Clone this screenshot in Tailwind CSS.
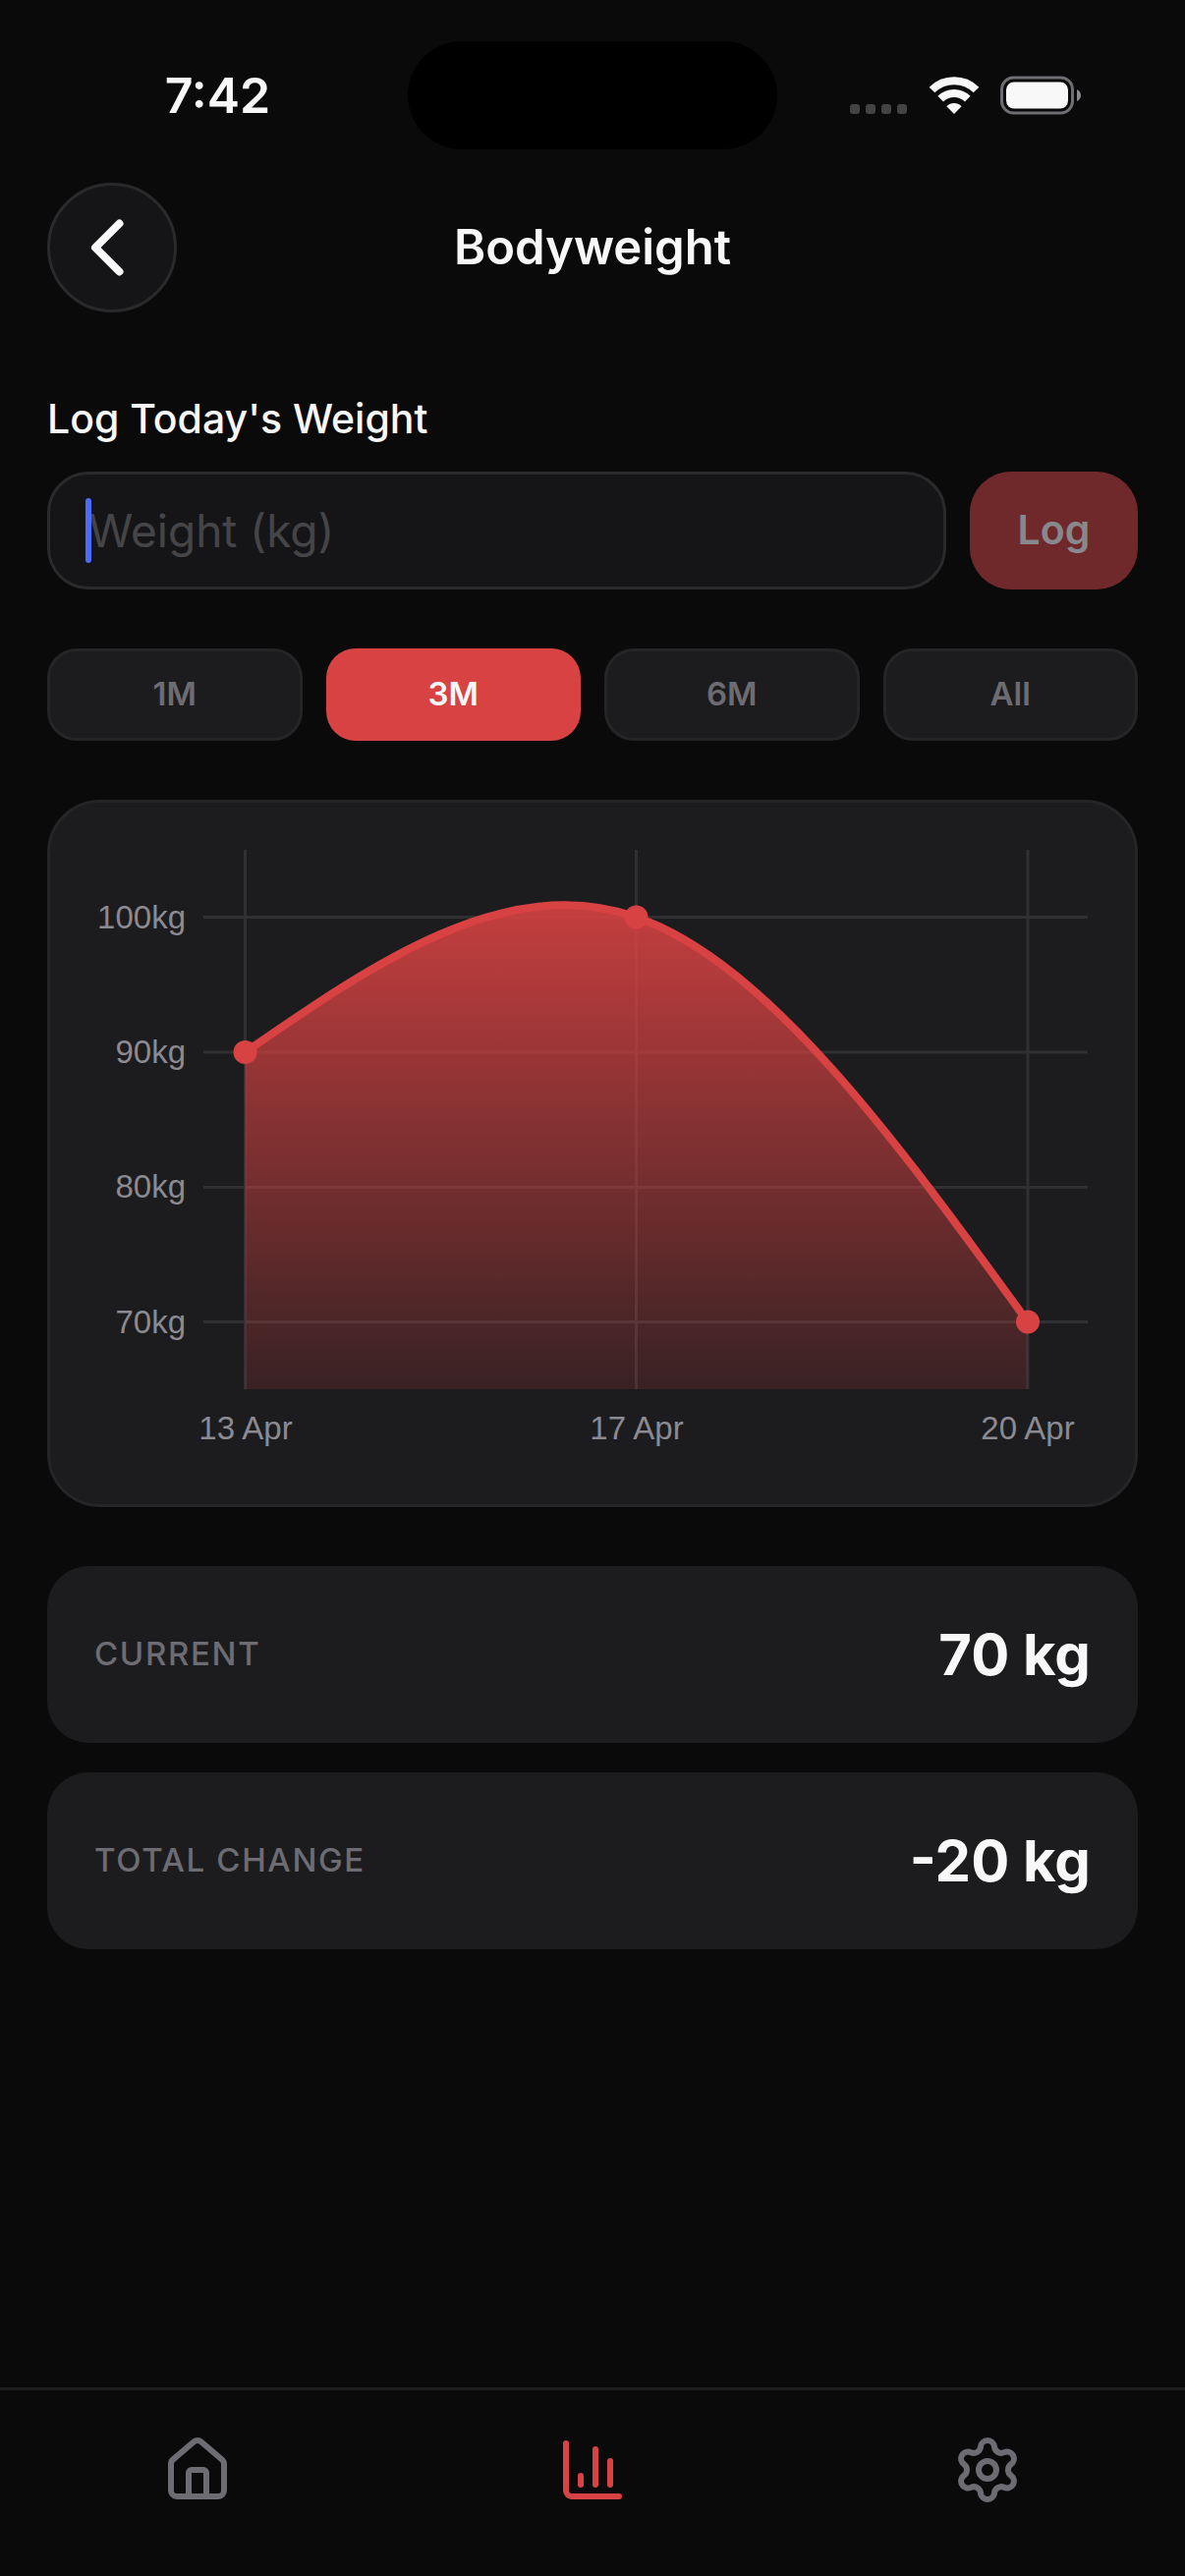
<!DOCTYPE html>
<html lang="en">
<head>
  <meta charset="UTF-8" />
  <meta name="viewport" content="width=device-width, initial-scale=1.0" />
  <title>Bodyweight</title>
  <script src="https://cdn.jsdelivr.net/npm/@tailwindcss/browser@4"></script>
</head>
<body class="bg-[#0a0a0a] text-[#f8f8f8] min-h-screen flex flex-col font-['Inter',sans-serif]">

  <!-- Status bar -->
  <div class="grid grid-cols-[1fr_376px_1fr] items-center pt-[42px] pb-[34px]">
    <div class="pl-7 text-center text-[50px] leading-[60px] font-semibold">7:42</div>
    <div class="h-[110px] rounded-full bg-black"></div>
    <div class="flex items-center justify-center pr-8">
      <svg class="w-[58px] h-[38px] mr-[22px]" viewBox="0 0 58 38" fill="#434345">
        <rect x="0" y="28" width="10" height="10" rx="3" />
        <rect x="16" y="28" width="10" height="10" rx="3" />
        <rect x="32" y="28" width="10" height="10" rx="3" />
        <rect x="48" y="28" width="10" height="10" rx="3" />
      </svg>
      <svg class="w-[52px] h-[38px] mr-[21px]" viewBox="0 0 52 38" fill="none" stroke="#f8f8f8" stroke-width="8">
        <path d="M3.5 13.5 A32 32 0 0 1 48.5 13.5" />
        <path d="M12.2 22.6 A19.5 19.5 0 0 1 39.8 22.6" />
        <path d="M26 38 L18.4 30.2 A10.8 10.8 0 0 1 33.6 30.2 Z" fill="#f8f8f8" stroke="none" />
      </svg>
      <svg class="w-[82px] h-[40px]" viewBox="0 0 82 40" fill="none">
        <rect x="1.5" y="2" width="72" height="36" rx="12" stroke="#6d6d72" stroke-width="3" />
        <rect x="6" y="6.5" width="63" height="27" rx="8" fill="#f8f8f8" />
        <path d="M78 14 Q82 16 82 20 Q82 24 78 26 Z" fill="#8a8a8f" />
      </svg>
    </div>
  </div>

  <!-- Header -->
  <header class="grid grid-cols-[132px_1fr_132px] items-center px-12">
    <button type="button" aria-label="Back" class="size-[132px] rounded-full bg-[#151517] border-3 border-[#2a2a2c] flex items-center justify-center">
      <svg class="w-[34px] h-[58px] mr-[10px]" viewBox="0 0 34 58" fill="none" stroke="#f8f8f8" stroke-width="8" stroke-linecap="round" stroke-linejoin="round">
        <path d="M29.5 4.5 L5 29 L29.5 53.5" />
      </svg>
    </button>
    <h1 class="text-center text-[49px] leading-[60px] font-semibold">Bodyweight</h1>
  </header>

  <main class="px-12 pt-[84px]">
    <!-- Log form -->
    <form onsubmit="event.preventDefault()">
      <label for="weight" class="block text-[41px] leading-[48px] font-medium mb-[30px]">Log Today's Weight</label>
      <div class="flex gap-6">
        <div class="relative flex-1">
          <input id="weight" type="text" inputmode="decimal" placeholder="Weight (kg)" class="block w-full h-[120px] px-[39px] rounded-[42px] bg-[#151517] border-3 border-[#2a2a2c] text-[46px] placeholder:text-[#454547] outline-none" />
          <span class="absolute left-[39px] top-[27px] w-[6px] h-[66px] rounded-full bg-[#4a6cf7]"></span>
        </div>
        <button type="submit" disabled class="w-[171px] h-[120px] rounded-[42px] bg-[#70292b] text-[#88898f] text-[41px] font-semibold">Log</button>
      </div>
    </form>

    <!-- Range -->
    <div class="grid grid-cols-4 gap-6 mt-[60px] text-[33px] font-semibold text-[#6d6c72]">
      <button type="button" class="h-[94px] rounded-[30px] bg-[#1c1c1e] border-3 border-[#252527]">1M</button>
      <button type="button" class="h-[94px] rounded-[30px] bg-[#d84242] text-[#f8f8f8]">3M</button>
      <button type="button" class="h-[94px] rounded-[30px] bg-[#1c1c1e] border-3 border-[#252527]">6M</button>
      <button type="button" class="h-[94px] rounded-[30px] bg-[#1c1c1e] border-3 border-[#252527]">All</button>
    </div>

    <!-- Chart -->
    <section class="mt-[60px] rounded-[54px] bg-[#1c1c1e] border-3 border-[#252527]">
      <svg class="block w-full" viewBox="0 0 1104 714" fill="none">
        <defs>
          <linearGradient id="area" x1="0" y1="104" x2="0" y2="597" gradientUnits="userSpaceOnUse">
            <stop offset="0" stop-color="#d84242" stop-opacity="0.9" />
            <stop offset="1" stop-color="#d84242" stop-opacity="0.15" />
          </linearGradient>
        </defs>
        <g stroke="#303032" stroke-width="3">
          <path d="M156 116.5H1056M156 254H1056M156 391.5H1056M156 528.5H1056" />
          <path d="M198.5 48V597M596.5 48V597M995 48V597" />
        </g>
        <path d="M198.5 254C331 162.4 464 70.8 596.5 116.5C729.3 162.2 862.2 345.3 995 528.5V597H198.5Z" fill="url(#area)" />
        <path d="M198.5 254C331 162.4 464 70.8 596.5 116.5C729.3 162.2 862.2 345.3 995 528.5" stroke="#d84242" stroke-width="8" />
        <g fill="#d84242">
          <circle cx="198.5" cy="254" r="12" />
          <circle cx="596.5" cy="116.5" r="12" />
          <circle cx="995" cy="528.5" r="12" />
        </g>
        <g class="font-['Liberation_Sans',sans-serif] text-[33px]" fill="#8b8a90">
          <g text-anchor="end">
            <text x="138" y="128">100kg</text>
            <text x="138" y="265">90kg</text>
            <text x="138" y="402">80kg</text>
            <text x="138" y="540">70kg</text>
          </g>
          <g text-anchor="middle">
            <text x="199" y="648">13 Apr</text>
            <text x="597" y="648">17 Apr</text>
            <text x="995" y="648">20 Apr</text>
          </g>
        </g>
      </svg>
    </section>

    <!-- Stats -->
    <dl class="mt-[60px] space-y-[30px]">
      <div class="flex items-center justify-between h-[180px] px-12 rounded-[42px] bg-[#1c1c1e]">
        <dt class="text-[33px] font-medium tracking-wider uppercase text-[#6d6c72]">Current</dt>
        <dd class="text-[58px] font-bold">70 kg</dd>
      </div>
      <div class="flex items-center justify-between h-[180px] px-12 rounded-[42px] bg-[#1c1c1e]">
        <dt class="text-[33px] font-medium tracking-wider uppercase text-[#6d6c72]">Total change</dt>
        <dd class="text-[58px] font-bold">-20 kg</dd>
      </div>
    </dl>
  </main>

  <!-- Tab bar -->
  <nav class="mt-auto grid grid-cols-3 justify-items-center pt-[45px] pb-[72px] border-t-3 border-[#1c1c1e] text-[#6d6c72]">
    <a href="#home" aria-label="Home">
      <svg class="size-[72px]" viewBox="0 0 24 24" fill="none" stroke="currentColor" stroke-width="2" stroke-linecap="round" stroke-linejoin="round">
        <path d="M15 21v-8a1 1 0 0 0-1-1h-4a1 1 0 0 0-1 1v8" />
        <path d="M3 10a2 2 0 0 1 .709-1.528l7-5.999a2 2 0 0 1 2.582 0l7 5.999A2 2 0 0 1 21 10v9a2 2 0 0 1-2 2H5a2 2 0 0 1-2-2z" />
      </svg>
    </a>
    <a href="#stats" aria-label="Stats" class="text-[#d84242]">
      <svg class="size-[72px]" viewBox="0 0 24 24" fill="none" stroke="currentColor" stroke-width="2" stroke-linecap="round" stroke-linejoin="round">
        <path d="M3 3v16a2 2 0 0 0 2 2h16" />
        <path d="M18 17V9" />
        <path d="M13 17V5" />
        <path d="M8 17v-3" />
      </svg>
    </a>
    <a href="#settings" aria-label="Settings">
      <svg class="size-[72px]" viewBox="0 0 24 24" fill="none" stroke="currentColor" stroke-width="2" stroke-linecap="round" stroke-linejoin="round">
        <path d="M9.671 4.136a2.34 2.34 0 0 1 4.659 0 2.34 2.34 0 0 0 3.319 1.915 2.34 2.34 0 0 1 2.33 4.033 2.34 2.34 0 0 0 0 3.831 2.34 2.34 0 0 1-2.33 4.033 2.34 2.34 0 0 0-3.319 1.915 2.34 2.34 0 0 1-4.659 0 2.34 2.34 0 0 0-3.32-1.915 2.34 2.34 0 0 1-2.33-4.033 2.34 2.34 0 0 0 0-3.831A2.34 2.34 0 0 1 6.35 6.051a2.34 2.34 0 0 0 3.319-1.915" />
        <circle cx="12" cy="12" r="3" />
      </svg>
    </a>
  </nav>
</body>
</html>
